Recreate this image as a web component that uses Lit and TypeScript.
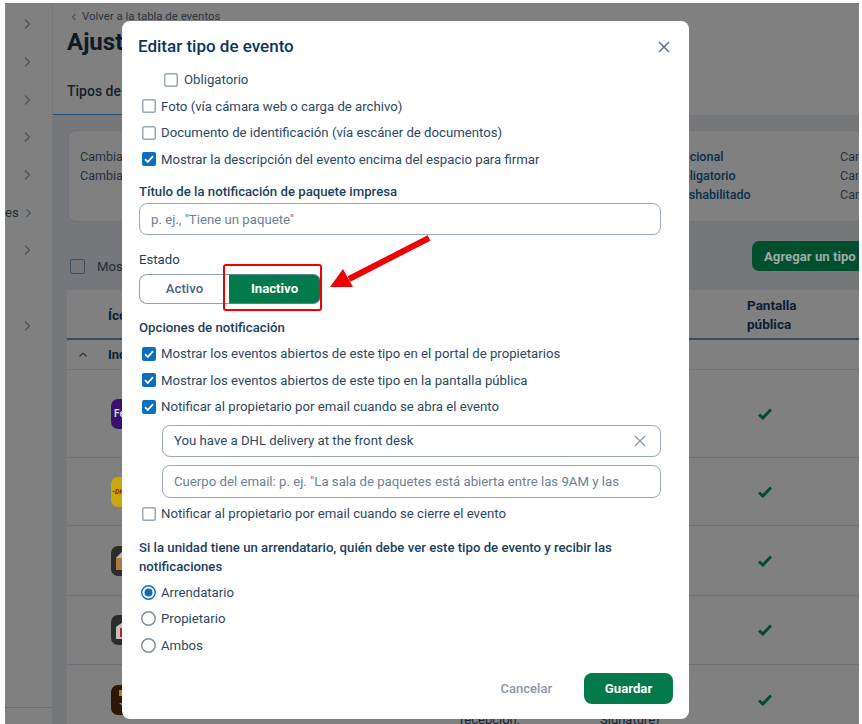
import { LitElement, html, css, svg } from 'lit';
import { customElement } from 'lit/decorators.js';
import { classMap } from 'lit/directives/class-map.js';

const chevronRight = html`<svg class="side-chevron" viewBox="0 0 10 12"><path d="M3 1.5 7.5 6 3 10.5" fill="none" stroke="#4a5560" stroke-width="1.4"/></svg>`;
const tick = svg`<path d="M3 7.2 5.8 10 11 4.2" fill="none" stroke="#fff" stroke-width="1.8"/>`;
const greenCheck = html`<svg class="row-check" viewBox="0 0 14 12"><path d="M1 6.5 4.8 10 13 1.5" fill="none" stroke="#004d2e" stroke-width="3"/></svg>`;

// the last row of the table is cut off by the bottom of the window
const carrierRows = [
  { name: 'fedex', height: 88 },
  { name: 'dhl', height: 68 },
  { name: 'box', height: 70 },
  { name: 'store', height: 69 },
  { name: 'ups', height: 70 },
];

const sideRows = ['', '', '', '', '', 'es', '', null, ''];

@customElement('app-root')
export class AppRoot extends LitElement {
  static styles = css`
    :host {
      display: block;
      position: relative;
      width: 862px;
      height: 724px;
      overflow: hidden;
      background: #fff;
      font-family: Roboto, "Liberation Sans", sans-serif;
      font-size: 13.2px;
      color: #2c4864;
    }
    .page {
      display: grid;
      grid-template-columns: 48px 1fr;
      margin: 3px 3px 0 5px;
      height: 721px;
      background: #808080;
      color: #1d2b38;
      overflow: hidden;
    }
    .sidebar {
      position: relative;
      border-right: 1px solid #70777e;
      padding-top: 2.5px;
    }
    .side-row {
      display: flex;
      justify-content: flex-end;
      align-items: center;
      gap: 5px;
      height: 37.7px;
      padding-right: 20px;
      font-size: 13px;
      white-space: nowrap;
    }
    .side-chevron { width: 10px; height: 12px; }
    .side-foot {
      position: absolute;
      left: 0;
      right: 0;
      top: 704px;
      border-top: 1px solid #6e6f70;
    }
    .main { min-width: 0; overflow: hidden; display: flex; flex-direction: column; }
    .head { height: 112px; flex: none; box-sizing: border-box; padding: 7px 0 0 14px; position: relative; }
    .back { font-size: 11.4px; line-height: 13px; color: #2a3540; display: flex; align-items: center; gap: 5px; padding-left: 4px; }
    .back svg { width: 6px; height: 8px; }
    h1 { margin: 3px 0 0; font-size: 24px; line-height: 32px; font-weight: 700; color: #0e1a26; }
    .tab {
      position: absolute;
      left: 0;
      bottom: 0;
      width: 190px;
      height: 44px;
      box-sizing: border-box;
      padding: 12px 0 0 14px;
      font-size: 14px;
      font-weight: 500;
      border-bottom: 1px solid #1e4f78;
      color: #16212c;
    }
    .band { flex: 1; background: #76777a; padding: 15px 0 0 15px; }
    .card {
      display: grid;
      grid-template-columns: 594px 166px 1fr;
      grid-auto-rows: 19px;
      box-sizing: border-box;
      height: 92px;
      margin-right: -20px;
      padding: 18px 0 0 11px;
      background: #808080;
      border: 1px solid #6f7174;
      border-radius: 8px;
      white-space: nowrap;
      color: #26323e;
      font-size: 12.5px;
    }
    .card .link { color: #062f50; font-weight: 500; }
    .toolbar { display: flex; align-items: center; height: 68px; padding: 20px 0 0 2px; box-sizing: border-box; white-space: nowrap; }
    .toolbar .box { width: 13px; height: 13px; border: 1.5px solid #3f4f60; border-radius: 2px; margin-right: 12px; }
    .add {
      align-self: flex-start;
      margin: -1px -16px 0 auto;
      width: 123px;
      height: 30px;
      box-sizing: border-box;
      padding-left: 12px;
      display: flex;
      align-items: center;
      border-radius: 7px;
      background: #00502f;
      color: #a3aaa8;
      font-size: 13.2px;
      font-weight: 700;
    }
    .table { margin-left: -1px; background: #808080; }
    .cols { display: grid; grid-template-columns: 44px 349px 140px 147px 1fr; align-items: center; white-space: nowrap; }
    .table-head { height: 50px; border-bottom: 2px solid #394a5a; box-sizing: border-box; padding-top: 2px; font-weight: 700; font-size: 13.5px; line-height: 19px; color: #0b2036; }
    .shift { margin-left: -3px; }
    .group { height: 30px; box-sizing: border-box; border-bottom: 1px solid #727476; font-weight: 700; font-size: 13px; color: #0b2036; }
    .group svg { width: 10px; height: 7px; margin-left: 11px; }
    .row { border-bottom: 1px solid #6e7276; box-sizing: border-box; font-size: 13px; color: #15222f; }
    .row.last { border-bottom: 0; }
    .row .cut { align-self: start; line-height: 14px; margin-top: 48px; }
    .row-check { width: 14px; height: 12px; margin-left: 11px; }
    .carrier {
      width: 30px;
      height: 30px;
      overflow: hidden;
      border-radius: 7px;
      display: block;
    }
    .modal {
      position: absolute;
      left: 122px;
      top: 21px;
      width: 567px;
      height: 698px;
      box-sizing: border-box;
      display: flex;
      flex-direction: column;
      background: #fff;
      border-radius: 8px;
      padding: 0 16px 15px 17px;
    }
    .modal-head { display: flex; align-items: center; justify-content: space-between; height: 45.5px; flex: none; padding-top: 6px; box-sizing: border-box; margin-left: -1px; }
    h2 { margin: -2px 0 0; font-size: 17px; font-weight: 500; color: #0f3557; }
    .close { width: 12px; height: 12px; margin-right: 3px; }
    .check-row { display: flex; align-items: center; gap: 6px; height: 26.5px; margin-left: 3px; white-space: nowrap; }
    .check-row.sub { margin-left: 25px; gap: 7px; }
    .check-box { width: 14px; height: 14px; flex: none; margin-right: -1px; }
    .field-label { font-weight: 500; line-height: 19px; color: #1c3f60; }
    .input {
      display: flex;
      align-items: center;
      justify-content: space-between;
      box-sizing: border-box;
      margin-right: 12px;
      border: 1.5px solid #97a9bb;
      border-radius: 8px;
      padding: 0 14px 0 11px;
      white-space: nowrap;
    }
    .placeholder { color: #6d8195; }
    .input.nested { margin-left: 23px; }
    .clear { width: 12px; height: 12px; }
    .segment { display: flex; width: 182px; height: 29.5px; margin-top: 5.5px; box-sizing: border-box; }
    .segment div { display: flex; align-items: center; justify-content: center; box-sizing: border-box; font-size: 13.2px; }
    .seg-off { width: 90px; border: 1.5px solid #8ea2b6; border-right: 0; border-radius: 8px 0 0 8px; color: #4a6480; font-weight: 500; }
    .seg-on { width: 92px; background: #027a4c; border: 1.5px solid #5f8296; border-left: 0; border-radius: 0 8px 8px 0; color: #fff; font-weight: 700; }
    .radio-row { display: flex; align-items: center; gap: 5px; height: 26.5px; margin-left: 2px; }
    .radio { width: 15px; height: 15px; flex: none; }
    .foot { margin-top: auto; display: flex; align-items: center; justify-content: flex-end; }
    .cancel { font-weight: 500; font-size: 13px; color: #8a98a6; margin-right: 32px; }
    .save {
      width: 89px;
      height: 31px;
      display: flex;
      align-items: center;
      justify-content: center;
      border-radius: 8px;
      background: #027a4c;
      color: #fff;
      font-weight: 700;
      font-size: 13.2px;
    }
    .callout {
      position: absolute;
      left: 223px;
      top: 264px;
      width: 99px;
      height: 47px;
      box-sizing: border-box;
      border: 2px solid #f00000;
      border-radius: 3px;
    }
    .arrow { position: absolute; left: 325px; top: 232px; width: 112px; height: 62px; }
  `;

  private checkBox(checked: boolean) {
    return html`<svg class="check-box" viewBox="0 0 14 14">
      ${checked
        ? svg`<rect width="14" height="14" rx="2" fill="#0a6fbe"/>${tick}`
        : svg`<rect x=".75" y=".75" width="12.5" height="12.5" rx="1.5" fill="#fff" stroke="#9aa9b8" stroke-width="1.5"/>`}
    </svg>`;
  }

  private checkRow(label: string, checked: boolean, sub = false, style = '') {
    return html`<div class=${classMap({ 'check-row': true, sub })} style=${style}>
      ${this.checkBox(checked)}<span>${label}</span>
    </div>`;
  }

  private radioRow(label: string, selected: boolean) {
    return html`<div class="radio-row">
      <svg class="radio" viewBox="0 0 15 15">
        <circle cx="7.5" cy="7.5" r="6.75" fill="#fff" stroke=${selected ? '#0a6fbe' : '#7d8d9c'} stroke-width="1.4"/>
        ${selected ? svg`<circle cx="7.5" cy="7.5" r="4" fill="#0a6fbe"/>` : ''}
      </svg>
      <span>${label}</span>
    </div>`;
  }

  private carrier(name: string) {
    if (name === 'fedex') {
      return html`<svg class="carrier" viewBox="0 0 30 30"><rect width="30" height="30" fill="#3a1070"/><text x="3" y="18" font-size="10" font-weight="700" fill="#d8d0e4" font-family="Roboto">Fe</text></svg>`;
    }
    if (name === 'dhl') {
      return html`<svg class="carrier" viewBox="0 0 30 30"><rect width="30" height="30" fill="#c9a80c"/><text x="1" y="17" font-size="7" font-weight="900" font-style="italic" fill="#a8201a" font-family="Roboto">-DHL</text></svg>`;
    }
    if (name === 'box') {
      return html`<svg class="carrier" viewBox="0 0 30 30"><rect width="30" height="30" fill="#2c2c2c"/><path d="M5 12 11 6h10v18H5z" fill="#a87c3c"/><path d="M5 12 11 6h6v6z" fill="#b8b4ac"/></svg>`;
    }
    if (name === 'store') {
      return html`<svg class="carrier" viewBox="0 0 30 30"><rect width="30" height="30" fill="#2c2c2c"/><path d="M5 12 12 7l8 5v12H5z" fill="#c4c0b8"/><rect x="9" y="13" width="4" height="9" fill="#a82a24"/></svg>`;
    }
    return html`<svg class="carrier" viewBox="0 0 30 30"><rect width="30" height="30" fill="#2c1606"/><path d="M8 5h14v13l-7 6-7-6z" fill="#a8861c"/><rect x="8" y="11" width="4" height="7" fill="#2c1606"/></svg>`;
  }

  private renderPage() {
    return html`<div class="page">
      <div class="sidebar">
        ${sideRows.map(
          (text) => html`<div class="side-row">${text === null ? '' : html`${text}${chevronRight}`}</div>`
        )}
        <div class="side-foot"></div>
      </div>
      <div class="main">
        <div class="head">
          <div class="back">
            <svg viewBox="0 0 6 8"><path d="M4.5 1 1.5 4l3 3" fill="none" stroke="#2a3540" stroke-width="1"/></svg>
            Volver a la tabla de eventos
          </div>
          <h1>Ajustes</h1>
          <div class="tab">Tipos de evento</div>
        </div>
        <div class="band">
          <div class="card">
            <span>Cambiar</span><span class="link">Opcional</span><span>Cambiar</span>
            <span>Cambiar</span><span class="link">Obligatorio</span><span>Cambiar</span>
            <span></span><span class="link">Deshabilitado</span><span>Cambiar</span>
          </div>
          <div class="toolbar">
            <div class="box"></div>
            <span>Mostrar</span>
            <div class="add">Agregar un tipo</div>
          </div>
          <div class="table">
            <div class="cols table-head">
              <span></span><span class="shift">Ícono</span><span></span><span></span><span>Pantalla<br />pública</span>
            </div>
            <div class="cols group">
              <svg viewBox="0 0 10 7"><path d="M1.5 5.5 5 2l3.5 3.5" fill="none" stroke="#333" stroke-width="1.2"/></svg>
              <span class="shift">Incluidos</span>
            </div>
            ${carrierRows.map(
              (row, i) => html`<div
                class=${classMap({ cols: true, row: true, last: i === carrierRows.length - 1 })}
                style="height:${row.height}px"
              >
                <span></span>
                ${this.carrier(row.name)}
                <span class="cut">${i === carrierRows.length - 1 ? 'recepción:' : ''}</span>
                <span class="cut">${i === carrierRows.length - 1 ? 'Signature)' : ''}</span>
                ${greenCheck}
              </div>`
            )}
          </div>
        </div>
      </div>
    </div>`;
  }

  private renderModal() {
    return html`<div class="modal">
      <div class="modal-head">
        <h2>Editar tipo de evento</h2>
        <svg class="close" viewBox="0 0 12 12"><path d="M1 1 11 11M11 1 1 11" stroke="#5a7590" stroke-width="1.5"/></svg>
      </div>
      ${this.checkRow('Obligatorio', false, true)}
      ${this.checkRow('Foto (vía cámara web o carga de archivo)', false)}
      ${this.checkRow('Documento de identificación (vía escáner de documentos)', false)}
      ${this.checkRow('Mostrar la descripción del evento encima del espacio para firmar', true)}
      <div class="field-label" style="margin-top:9px">Título de la notificación de paquete impresa</div>
      <div class="input" style="height:32px;margin-top:2.5px"><span class="placeholder">p. ej., "Tiene un paquete"</span></div>
      <div class="field-label" style="margin-top:14.5px;font-weight:400">Estado</div>
      <div class="segment">
        <div class="seg-off">Activo</div>
        <div class="seg-on">Inactivo</div>
      </div>
      <div class="field-label" style="margin-top:14px">Opciones de notificación</div>
      ${this.checkRow('Mostrar los eventos abiertos de este tipo en el portal de propietarios', true, false, 'margin-top:4px')}
      ${this.checkRow('Mostrar los eventos abiertos de este tipo en la pantalla pública', true)}
      ${this.checkRow('Notificar al propietario por email cuando se abra el evento', true)}
      <div class="input nested" style="height:31.5px;margin-top:5px">
        <span>You have a DHL delivery at the front desk</span>
        <svg class="clear" viewBox="0 0 12 12"><path d="M1 1 11 11M11 1 1 11" stroke="#8a9aaa" stroke-width="1.4"/></svg>
      </div>
      <div class="input nested" style="height:33px;margin-top:8px">
        <span class="placeholder">Cuerpo del email: p. ej. "La sala de paquetes está abierta entre las 9AM y las</span>
      </div>
      ${this.checkRow('Notificar al propietario por email cuando se cierre el evento', false, false, 'margin-top:2.75px')}
      <div class="field-label" style="margin-top:11px;margin-right:12px">Si la unidad tiene un arrendatario, quién debe ver este tipo de evento y recibir las notificaciones</div>
      <div style="margin-top:3.25px">
        ${this.radioRow('Arrendatario', true)}
        ${this.radioRow('Propietario', false)}
        ${this.radioRow('Ambos', false)}
      </div>
      <div class="foot">
        <span class="cancel">Cancelar</span>
        <div class="save">Guardar</div>
      </div>
    </div>`;
  }

  render() {
    return html`
      ${this.renderPage()}
      ${this.renderModal()}
      <div class="callout"></div>
      <svg class="arrow" viewBox="325 232 112 62">
        <path d="M429 238 349 279" stroke="#f00000" stroke-width="6"/>
        <path d="M330 287 343 269 353 287z" fill="#f00000"/>
      </svg>
    `;
  }
}
